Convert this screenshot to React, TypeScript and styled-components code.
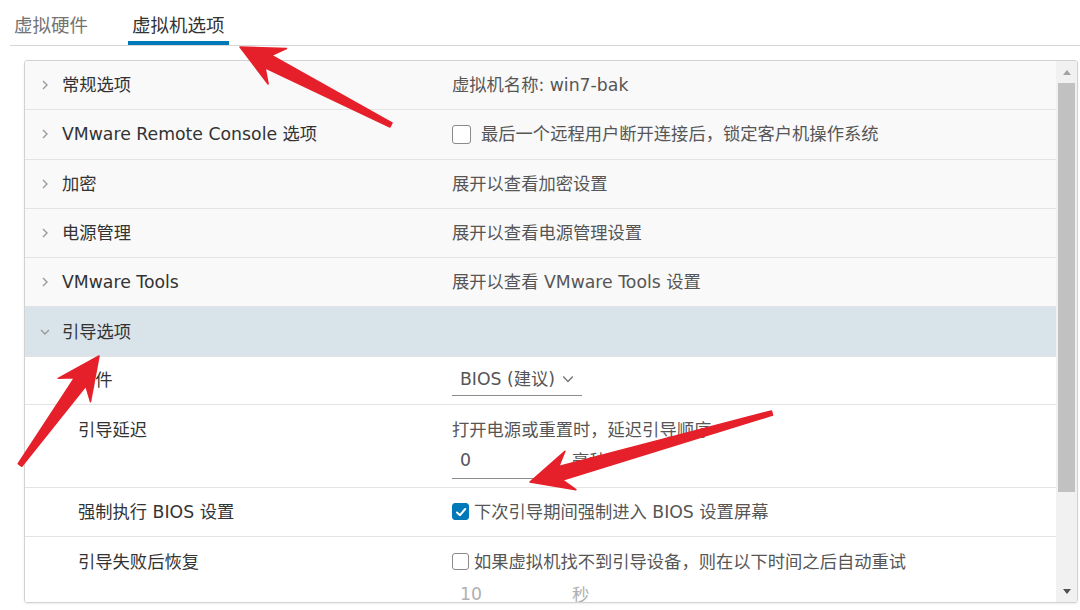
import React from "react";
import styled, { createGlobalStyle } from "styled-components";

const GlobalStyle = createGlobalStyle`
  html, body {
    margin: 0;
    padding: 0;
    background: #fff;
  }
  body {
    font-family: "DejaVu Sans", "Noto Sans CJK SC", sans-serif;
    color: #333;
  }
`;

const Page = styled.div`
  position: relative;
  width: 1080px;
  height: 610px;
  overflow: hidden;
`;

const TabBar = styled.div`
  display: flex;
  gap: 36px;
  height: 46px;
  margin-left: 10px;
  border-bottom: 1px solid #d6d6d6;
  box-sizing: border-box;
`;

const Tab = styled.div<{ $active?: boolean }>`
  display: flex;
  align-items: center;
  padding: 2px 4px 0;
  font-size: 18.5px;
  color: ${(p) => (p.$active ? "#333" : "#737373")};
  box-shadow: ${(p) => (p.$active ? "inset 0 -4px 0 #0079b8" : "none")};
`;

const Panel = styled.div`
  display: flex;
  margin: 14px 0 0 24px;
  width: 1054px;
  height: 543px;
  border: 1px solid #d2d2d2;
  border-radius: 3px;
  box-sizing: border-box;
  overflow: hidden;
  box-shadow: 0 1px 2px rgba(0, 0, 0, 0.08);
`;

const List = styled.div`
  flex: 1;
  display: flex;
  flex-direction: column;
  overflow: hidden;
`;

const Row = styled.div<{ $bg?: string; $h?: number; $top?: boolean; $last?: boolean }>`
  flex: none;
  display: grid;
  grid-template-columns: 427px 1fr;
  align-items: ${(p) => (p.$top ? "start" : "center")};
  height: ${(p) => p.$h ?? 49.3}px;
  padding-top: ${(p) => (p.$top ? 13 : 0)}px;
  box-sizing: border-box;
  background: ${(p) => p.$bg ?? "#fff"};
  border-bottom: ${(p) => (p.$last ? "none" : "1px solid #e3e3e3")};
  font-size: 17.3px;
  line-height: 24px;
`;

const Label = styled.div<{ $child?: boolean }>`
  display: flex;
  align-items: center;
  gap: 12px;
  padding-left: ${(p) => (p.$child ? 53 : 15)}px;
  color: #333;
  white-space: nowrap;
`;

const Value = styled.div`
  color: #565656;
  white-space: nowrap;
`;

const ChevronIcon = styled.svg<{ $down?: boolean; $small?: boolean }>`
  width: ${(p) => (p.$small ? 12 : 10)}px;
  height: ${(p) => (p.$small ? 12 : 10)}px;
  flex: none;
  transform: ${(p) => (p.$down ? "rotate(90deg)" : "none")};
`;

const CheckLine = styled.div<{ $gap: number }>`
  display: flex;
  align-items: center;
  gap: ${(p) => p.$gap}px;
`;

const Box = styled.span<{ $size: number; $checked?: boolean }>`
  display: inline-flex;
  align-items: center;
  justify-content: center;
  width: ${(p) => p.$size}px;
  height: ${(p) => p.$size}px;
  box-sizing: border-box;
  border: 1.5px solid ${(p) => (p.$checked ? "#0079b8" : "#8a8a8a")};
  border-radius: 3px;
  background: ${(p) => (p.$checked ? "#0079b8" : "#fff")};
`;

const Select = styled.div`
  display: inline-flex;
  align-items: center;
  justify-content: space-between;
  width: 130px;
  height: 31px;
  padding: 0 8px 2px 8px;
  box-sizing: border-box;
  border-bottom: 1px solid #8c8c8c;
  color: #565656;
`;

const InputLine = styled.div<{ $gapTop?: number }>`
  display: flex;
  align-items: center;
  height: 36px;
  margin-top: ${(p) => p.$gapTop ?? 0}px;
`;

const Input = styled.div<{ $disabled?: boolean; $plain?: boolean }>`
  width: 100px;
  height: 36px;
  display: flex;
  align-items: center;
  padding-left: 8px;
  box-sizing: border-box;
  border-bottom: 1px solid ${(p) => (p.$plain ? "#e0e0e0" : "#8c8c8c")};
  color: ${(p) => (p.$disabled ? "#b0b0b0" : "#565656")};
`;

const Unit = styled.span<{ $disabled?: boolean }>`
  margin-left: 20px;
  color: ${(p) => (p.$disabled ? "#b0b0b0" : "#565656")};
`;

const ScrollBar = styled.div`
  flex: none;
  width: 21px;
  display: flex;
  flex-direction: column;
  background: #f1f1f1;
`;

const ScrollButton = styled.div`
  height: 22px;
  display: flex;
  align-items: center;
  justify-content: center;
`;

const Thumb = styled.div`
  height: 409px;
  margin: 0 2px;
  background: #c1c1c1;
`;

const ScrollSpace = styled.div`
  flex: 1;
`;

const Triangle = styled.span<{ $up?: boolean }>`
  width: 0;
  height: 0;
  border-left: 4.5px solid transparent;
  border-right: 4.5px solid transparent;
  ${(p) => (p.$up ? "border-bottom: 5px solid #a3a3a3;" : "border-top: 5px solid #505050;")}
`;

const Overlay = styled.svg`
  position: absolute;
  left: 0;
  top: 0;
  pointer-events: none;
`;

type Pt = [number, number];

const arrowPoints = (tip: Pt, tail: Pt, head = 42, half = 20, neck = 7, end = 2.2) => {
  const dx = tail[0] - tip[0];
  const dy = tail[1] - tip[1];
  const len = Math.hypot(dx, dy);
  const ux = dx / len;
  const uy = dy / len;
  const nx = -uy;
  const ny = ux;
  const at = (d: number, s: number) =>
    `${(tip[0] + ux * d + nx * s).toFixed(1)},${(tip[1] + uy * d + ny * s).toFixed(1)}`;
  return [
    at(0, 0),
    at(head, half),
    at(head * 0.76, neck),
    at(len, end),
    at(len, -end),
    at(head * 0.76, -neck),
    at(head, -half),
  ].join(" ");
};

const arrows: { tip: Pt; tail: Pt }[] = [
  { tip: [240, 47], tail: [391, 125] },
  { tip: [99, 356], tail: [20, 465] },
  { tip: [530, 482], tail: [772, 413] },
];

type RowData = { label: string; value: React.ReactNode };

const collapsed: RowData[] = [
  { label: "常规选项", value: "虚拟机名称: win7-bak" },
  {
    label: "VMware Remote Console 选项",
    value: (
      <CheckLine $gap={10}>
        <Box $size={19} />
        最后一个远程用户断开连接后，锁定客户机操作系统
      </CheckLine>
    ),
  },
  { label: "加密", value: "展开以查看加密设置" },
  { label: "电源管理", value: "展开以查看电源管理设置" },
  { label: "VMware Tools", value: "展开以查看 VMware Tools 设置" },
];

function Chevron({ down }: { down?: boolean }) {
  return (
    <ChevronIcon viewBox="0 0 10 10" $down={down}>
      <polyline points="3,1 7,5 3,9" fill="none" stroke="#9a9a9a" strokeWidth="1.4" />
    </ChevronIcon>
  );
}

function Check() {
  return (
    <svg width="12" height="12" viewBox="0 0 12 12">
      <polyline points="2,6.5 5,9.2 10.2,3" fill="none" stroke="#fff" strokeWidth="2" strokeLinecap="round" strokeLinejoin="round" />
    </svg>
  );
}

export default function App() {
  return (
    <Page>
      <GlobalStyle />
      <TabBar>
        <Tab>虚拟硬件</Tab>
        <Tab $active>虚拟机选项</Tab>
      </TabBar>

      <Panel>
        <List>
          {collapsed.map((r) => (
            <Row key={r.label} $bg="#f9f9f9">
              <Label>
                <Chevron />
                {r.label}
              </Label>
              <Value>{r.value}</Value>
            </Row>
          ))}

          <Row $bg="#d9e3ea">
            <Label>
              <Chevron down />
              引导选项
            </Label>
            <Value />
          </Row>

          <Row $h={48.2}>
            <Label $child>固件</Label>
            <Value>
              <Select>
                BIOS (建议)
                <ChevronIcon viewBox="0 0 10 10" $down $small>
                  <polyline points="3,1 7,5 3,9" fill="none" stroke="#777" strokeWidth="1.2" />
                </ChevronIcon>
              </Select>
            </Value>
          </Row>

          <Row $h={83} $top>
            <Label $child>引导延迟</Label>
            <Value>
              <div>打开电源或重置时，延迟引导顺序</div>
              <InputLine $gapTop={1}>
                <Input>0</Input>
                <Unit>毫秒</Unit>
              </InputLine>
            </Value>
          </Row>

          <Row $h={49}>
            <Label $child>强制执行 BIOS 设置</Label>
            <Value>
              <CheckLine $gap={5}>
                <Box $size={17} $checked>
                  <Check />
                </Box>
                下次引导期间强制进入 BIOS 设置屏幕
              </CheckLine>
            </Value>
          </Row>

          <Row $h={83} $top $last>
            <Label $child>引导失败后恢复</Label>
            <Value>
              <CheckLine $gap={5}>
                <Box $size={17} />
                如果虚拟机找不到引导设备，则在以下时间之后自动重试
              </CheckLine>
              <InputLine $gapTop={3}>
                <Input $disabled $plain>10</Input>
                <Unit $disabled>秒</Unit>
              </InputLine>
            </Value>
          </Row>
        </List>

        <ScrollBar>
          <ScrollButton>
            <Triangle $up />
          </ScrollButton>
          <Thumb />
          <ScrollSpace />
          <ScrollButton>
            <Triangle />
          </ScrollButton>
        </ScrollBar>
      </Panel>

      <Overlay width="1080" height="610" viewBox="0 0 1080 610">
        {arrows.map((a, i) => (
          <polygon
            key={i}
            points={arrowPoints(a.tip, a.tail)}
            fill="#e6202a"
            stroke="#e6202a"
            strokeWidth="1.5"
            strokeLinejoin="round"
          />
        ))}
      </Overlay>
    </Page>
  );
}
